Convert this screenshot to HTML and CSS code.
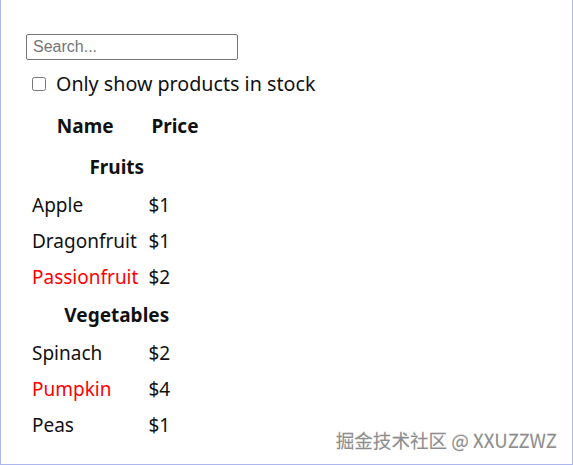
FILE: index.html
```html
<!DOCTYPE html>
<html lang="en">
  <head>
    <meta charset="UTF-8">
    <meta name="viewport" content="width=device-width, initial-scale=1.0">
    <title>Filterable Product Table</title>
    <link rel="stylesheet" href="styles.css">
  </head>
  <body>
    <div class="app">
      <form class="search-bar">
        <input class="search-input" type="text" placeholder="Search...">
        <label class="stock-filter">
          <input class="stock-check" type="checkbox">Only show products in stock
        </label>
      </form>

      <table class="product-table">
        <thead>
          <tr>
            <th>Name</th>
            <th>Price</th>
          </tr>
        </thead>
        <tbody>
          <tr class="category-row">
            <th colspan="2">Fruits</th>
          </tr>
          <tr><td>Apple</td><td>$1</td></tr>
          <tr><td>Dragonfruit</td><td>$1</td></tr>
          <tr><td><span class="out-of-stock">Passionfruit</span></td><td>$2</td></tr>
          <tr class="category-row">
            <th colspan="2">Vegetables</th>
          </tr>
          <tr><td>Spinach</td><td>$2</td></tr>
          <tr><td><span class="out-of-stock">Pumpkin</span></td><td>$4</td></tr>
          <tr><td>Peas</td><td>$1</td></tr>
        </tbody>
      </table>
    </div>

    <div class="watermark">掘金技术社区 @ XXUZZWZ</div>
  </body>
</html>
```
FILE: styles.css
```css
:root {
  --frame: #aeb6ee;
  --text: #111;
  --muted: #757575;
  --danger: #f00;
}

html,
body {
  height: 100%;
}

body {
  margin: 0;
  box-sizing: border-box;
  border: 1px solid var(--frame);
  border-top: none;
  background: #fff;
  color: var(--text);
  font-family: "Noto Sans", "Open Sans", sans-serif;
  font-size: 19px;
  position: relative;
}

.app {
  padding: 34px 0 0 25px;
}

.search-bar {
  margin: 0;
}

.search-input {
  display: block;
  box-sizing: border-box;
  width: 212px;
  height: 26px;
  margin: 0;
  padding: 0 6px;
  border: 1px solid #767676;
  border-radius: 2px;
  font-family: "Liberation Sans", Arial, sans-serif;
  font-size: 16px;
  color: #000;
}

.search-input::placeholder {
  color: var(--muted);
}

.stock-filter {
  display: block;
  padding: 1px 0 0 6px;
  font-size: 19.7px;
  line-height: 45px;
}

.stock-check {
  width: 14px;
  height: 14px;
  margin: 0 10px 0 0;
  vertical-align: 0;
}

.product-table {
  border-spacing: 2px 0;
  line-height: 36px;
}

.product-table td {
  padding: 0 4px;
}

.product-table th {
  padding: 0 7px;
  font-weight: 700;
  line-height: 40px;
}

.product-table thead th {
  line-height: 41px;
}

.out-of-stock {
  color: var(--danger);
}

.watermark {
  position: absolute;
  right: 15px;
  bottom: 12px;
  font-family: "Noto Sans CJK SC", sans-serif;
  font-size: 18.6px;
  line-height: 24px;
  color: #8c8c8c;
  text-shadow: 0 1px 0 #fff, 0 -1px 0 #ddd;
}
```
